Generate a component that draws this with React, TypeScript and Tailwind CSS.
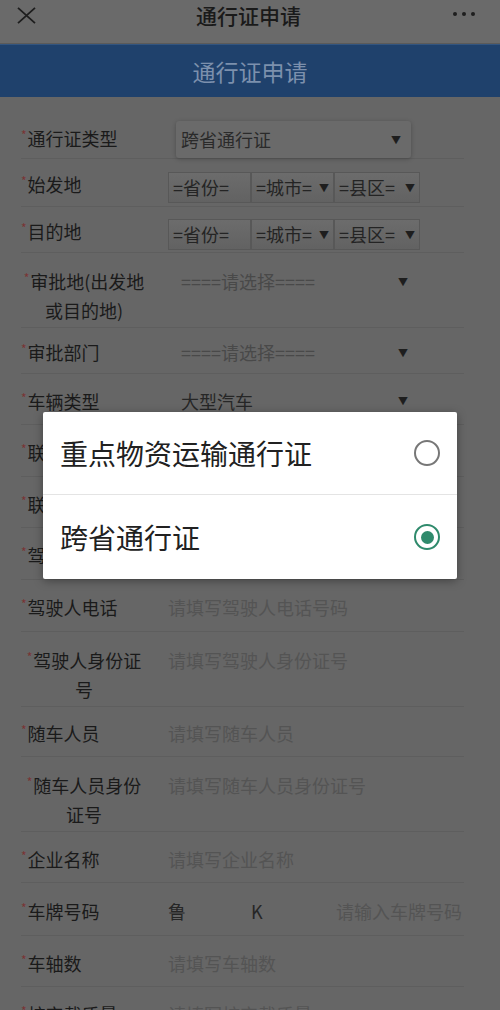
import React from "react";

const FONT = { fontFamily: '"Noto Sans CJK SC", "Noto Sans", sans-serif' };

function Star() {
  return <span className="text-[12px] leading-none text-[#7a3434] self-start mt-[5px] mr-[1px]">*</span>;
}

function Label({ lines }: { lines: string[] }) {
  if (lines.length === 1) {
    return (
      <div className="w-[147px] shrink-0 flex items-start text-[18px] leading-[29px] text-[#1a1a1a]">
        <Star />
        <span>{lines[0]}</span>
      </div>
    );
  }
  return (
    <div className="w-[147px] shrink-0">
      <div className="w-[126px] text-center text-[18px] leading-[29px] text-[#1a1a1a]">
        <div className="flex items-start justify-center">
          <Star />
          <span>{lines[0]}</span>
        </div>
        {lines.slice(1).map((l) => (
          <div key={l}>{l}</div>
        ))}
      </div>
    </div>
  );
}

function Arrow() {
  return <span className="text-[10px] leading-none text-[#1e1e1e]">▼</span>;
}

function Row({
  h,
  multi,
  children,
}: {
  h: string;
  multi?: boolean;
  children: React.ReactNode;
}) {
  return (
    <div
      className={`flex border-b border-[#5e5e5e] ${h} ${multi ? "items-start pt-[14px]" : "items-center pt-[4px]"}`}
    >
      {children}
    </div>
  );
}

function Placeholder({ text }: { text: string }) {
  return <div className="text-[18px] leading-[29px] text-[#545454]">{text}</div>;
}

function PlainSelect({ text, dim }: { text: string; dim?: boolean }) {
  return (
    <div className="ml-[13px] w-[231px] flex items-center justify-between pr-[4px]">
      <span className={`text-[18px] leading-[29px] ${dim ? "text-[#494949]" : "text-[#262626]"}`}>{text}</span>
      <Arrow />
    </div>
  );
}

function TriSelect() {
  const box =
    "h-[31px] flex items-center justify-between px-[4px] border border-[#585858] bg-gradient-to-b from-[#6c6c6c] to-[#626262] text-[18px] text-[#242424]";
  return (
    <div className="flex mt-[6px]">
      <div className={`${box} w-[83px]`}>
        <span>=省份=</span>
      </div>
      <div className={`${box} w-[83px]`}>
        <span>=城市=</span>
        <Arrow />
      </div>
      <div className={`${box} w-[86px]`}>
        <span>=县区=</span>
        <Arrow />
      </div>
    </div>
  );
}

function Radio({ checked }: { checked?: boolean }) {
  if (checked) {
    return (
      <div className="w-[26px] h-[26px] rounded-full border-[2px] border-[#2f8a6c] flex items-center justify-center">
        <div className="w-[13px] h-[13px] rounded-full bg-[#2f8a6c]" />
      </div>
    );
  }
  return <div className="w-[26px] h-[26px] rounded-full border-[2px] border-[#777777]" />;
}

export default function App() {
  return (
    <div className="relative w-[500px] h-[1010px] overflow-hidden bg-[#666666]" style={FONT}>
      {/* top nav */}
      <div className="h-[44px] bg-[#6a6a6a] border-b border-[#5a5a5a] flex items-start justify-between px-[17px] pt-[6px]">
        <svg width="19" height="17" viewBox="0 0 19 17" className="mt-[1px]">
          <path d="M1 0.8 L18 16.2 M18 0.8 L1 16.2" stroke="#1e1e1e" strokeWidth="1.8" fill="none" />
        </svg>
        <div className="text-[21px] leading-[18px] font-medium text-[#1a1a1a] ml-[8px]">通行证申请</div>
        <div className="flex gap-[5px] mt-[6px] mr-[8px]">
          <div className="w-[4px] h-[4px] rounded-full bg-[#1e1e1e]" />
          <div className="w-[4px] h-[4px] rounded-full bg-[#1e1e1e]" />
          <div className="w-[4px] h-[4px] rounded-full bg-[#1e1e1e]" />
        </div>
      </div>
      {/* blue header */}
      <div className="h-[53px] bg-[#1f416c] border-t border-[#33557f] flex items-center justify-center">
        <span className="text-[23px] text-[#7c90ad]">通行证申请</span>
      </div>

      {/* form */}
      <div className="pt-[18px] pl-[21px] w-[464px]">
        <Row h="h-[44px]">
          <Label lines={["通行证类型"]} />
          <div className="ml-[8px] mt-[2px] w-[235px] h-[37px] rounded-[3px] bg-[#6a6a6a] shadow-[0_1px_4px_rgba(0,0,0,0.25)] flex items-center justify-between pl-[5px] pr-[10px]">
            <span className="text-[18px] text-[#2a2a2a]">跨省通行证</span>
            <Arrow />
          </div>
        </Row>
        <Row h="h-[48px]">
          <Label lines={["始发地"]} />
          <TriSelect />
        </Row>
        <Row h="h-[46px]">
          <Label lines={["目的地"]} />
          <TriSelect />
        </Row>
        <Row h="h-[75px]" multi>
          <Label lines={["审批地(出发地", "或目的地)"]} />
          <PlainSelect text="====请选择====" dim />
        </Row>
        <Row h="h-[46px]">
          <Label lines={["审批部门"]} />
          <PlainSelect text="====请选择====" dim />
        </Row>
        <Row h="h-[51px]">
          <Label lines={["车辆类型"]} />
          <PlainSelect text="大型汽车" />
        </Row>
        <Row h="h-[52px]">
          <Label lines={["联系人"]} />
          <Placeholder text="请填写联系人" />
        </Row>
        <Row h="h-[51px]">
          <Label lines={["联系电话"]} />
          <Placeholder text="请填写联系电话" />
        </Row>
        <Row h="h-[52px]">
          <Label lines={["驾驶人"]} />
          <Placeholder text="请填写驾驶人" />
        </Row>
        <Row h="h-[52px]">
          <Label lines={["驾驶人电话"]} />
          <Placeholder text="请填写驾驶人电话号码" />
        </Row>
        <Row h="h-[75px]" multi>
          <Label lines={["驾驶人身份证", "号"]} />
          <Placeholder text="请填写驾驶人身份证号" />
        </Row>
        <Row h="h-[50px]">
          <Label lines={["随车人员"]} />
          <Placeholder text="请填写随车人员" />
        </Row>
        <Row h="h-[75px]" multi>
          <Label lines={["随车人员身份", "证号"]} />
          <Placeholder text="请填写随车人员身份证号" />
        </Row>
        <Row h="h-[51px]">
          <Label lines={["企业名称"]} />
          <Placeholder text="请填写企业名称" />
        </Row>
        <Row h="h-[53px]">
          <Label lines={["车牌号码"]} />
          <div className="flex items-center text-[18px] leading-[29px]">
            <span className="w-[83px] text-[#262626]">鲁</span>
            <span className="w-[85px] text-[#262626]">K</span>
            <span className="text-[#545454]">请输入车牌号码</span>
          </div>
        </Row>
        <Row h="h-[51px]">
          <Label lines={["车轴数"]} />
          <Placeholder text="请填写车轴数" />
        </Row>
        <Row h="h-[51px]">
          <Label lines={["核定载质量"]} />
          <Placeholder text="请填写核定载质量" />
        </Row>
      </div>

      {/* dialog */}
      <div className="absolute left-[43px] top-[412px] w-[414px] bg-white rounded-[2px] shadow-[0_2px_10px_rgba(0,0,0,0.35)]">
        <div className="h-[83px] flex items-center justify-between pl-[17px] pr-[17px] border-b border-[#e4e4e4]">
          <span className="text-[28px] text-[#212121]">重点物资运输通行证</span>
          <Radio />
        </div>
        <div className="h-[84px] flex items-center justify-between pl-[17px] pr-[17px]">
          <span className="text-[28px] text-[#212121]">跨省通行证</span>
          <Radio checked />
        </div>
      </div>
    </div>
  );
}
